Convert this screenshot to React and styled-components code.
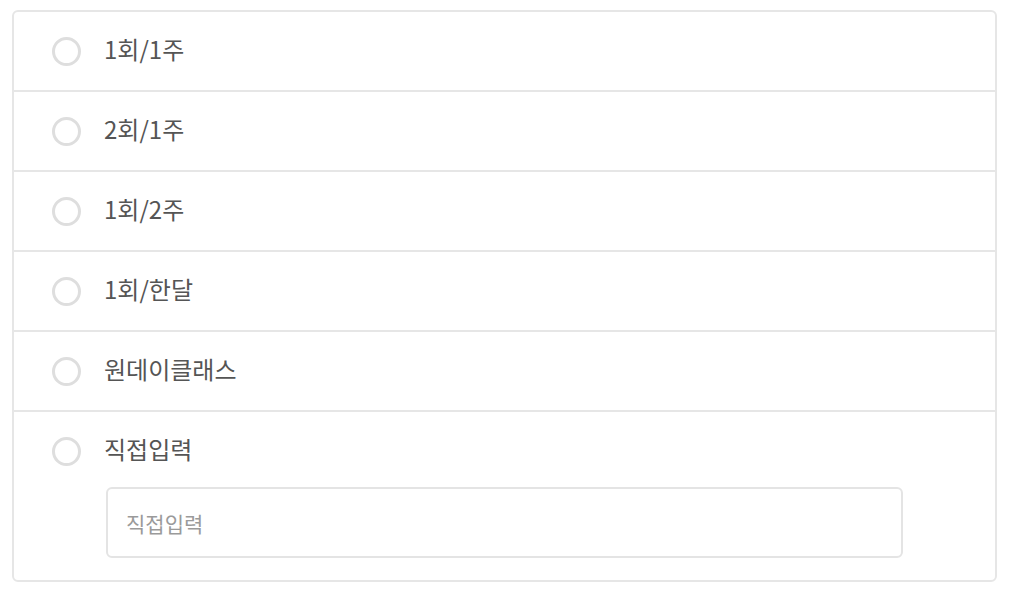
import React from 'react';
import styled, { createGlobalStyle } from 'styled-components';

const GlobalStyle = createGlobalStyle`
  body {
    margin: 0;
    background: #ffffff;
    font-family: "Noto Sans CJK KR", "Noto Sans", sans-serif;
  }
`;

const Page = styled.div`
  padding: 10px 13px 0 12px;
`;

const List = styled.div`
  display: flex;
  flex-direction: column;
  border: 2px solid #e6e6e6;
  border-radius: 6px;
  background: #fff;
`;

const Row = styled.div`
  display: flex;
  flex-direction: column;
  padding: ${p => (p.$last ? '0 0 22px 0' : '0')};
  border-bottom: ${p => (p.$last ? 'none' : '2px solid #e6e6e6')};
`;

const Option = styled.label`
  display: flex;
  align-items: center;
  height: 78px;
  padding-left: 38px;
  gap: 23px;
  cursor: pointer;
`;

const Circle = styled.span`
  box-sizing: border-box;
  width: 29px;
  height: 29px;
  border-radius: 50%;
  border: 3px solid #dedede;
  background: #fff;
  flex-shrink: 0;
`;

const Text = styled.span`
  font-size: 24px;
  color: #555555;
  line-height: 1;
  margin-top: -4px;
`;

const InputWrap = styled.div`
  padding: 0 92px 0 92px;
  margin-top: -3px;
`;

const TextInput = styled.input`
  box-sizing: border-box;
  width: 100%;
  height: 71px;
  border: 2px solid #e4e4e4;
  border-radius: 6px;
  padding: 0 18px;
  font-family: "Noto Sans CJK KR", "Noto Sans", sans-serif;
  font-size: 21px;
  color: #555;
  outline: none;
  &::placeholder {
    color: #9a9a9a;
  }
`;

const options = ['1회/1주', '2회/1주', '1회/2주', '1회/한달', '원데이클래스', '직접입력'];

export default function App() {
  return (
    <Page>
      <GlobalStyle />
      <List>
        {options.map((o, i) => {
          const last = i === options.length - 1;
          return (
            <Row key={o} $last={last}>
              <Option>
                <Circle />
                <Text>{o}</Text>
              </Option>
              {last && (
                <InputWrap>
                  <TextInput placeholder="직접입력" />
                </InputWrap>
              )}
            </Row>
          );
        })}
      </List>
    </Page>
  );
}
